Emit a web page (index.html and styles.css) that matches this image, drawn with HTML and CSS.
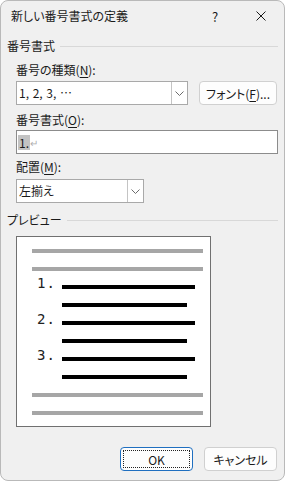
FILE: index.html
```html
<!DOCTYPE html>
<html lang="ja">
<head>
<meta charset="UTF-8" />
<title>新しい番号書式の定義</title>
<link rel="stylesheet" href="styles.css">
</head>
<body>

<div class="dialog">
  <!-- Title bar -->
  <div class="titlebar">
    <span class="title">新しい番号書式の定義</span>
    <span class="cap-btn help">?</span>
    <span class="cap-btn">
      <svg width="10" height="10" viewBox="0 0 10 10"><path d="M0.5 0.5L9.5 9.5M9.5 0.5L0.5 9.5" stroke="#1a1a1a" stroke-width="1" fill="none"/></svg>
    </span>
  </div>

  <div class="body">
    <!-- Number format group -->
    <div class="group-head">番号書式</div>

    <div class="label label-first">番号の種類(<u>N</u>):</div>
    <div class="row">
      <div class="combo combo-wide">
        <span class="combo-text plain">1, 2, 3, …</span>
        <span class="combo-btn">
          <svg width="9" height="5" viewBox="0 0 9 5"><path d="M0.5 0.5L4.5 4.5L8.5 0.5" stroke="#6b6b6b" fill="none"/></svg>
        </span>
      </div>
      <button class="btn btn-font">フォント(<u>F</u>)...</button>
    </div>

    <div class="label label-format">番号書式(<u>O</u>):</div>
    <div class="field">
      <span class="sel">1.</span><span class="mark">↵</span>
    </div>

    <div class="label label-align">配置(<u>M</u>):</div>
    <div class="combo combo-narrow">
      <span class="combo-text">左揃え</span>
      <span class="combo-btn">
        <svg width="9" height="5" viewBox="0 0 9 5"><path d="M0.5 0.5L4.5 4.5L8.5 0.5" stroke="#6b6b6b" fill="none"/></svg>
      </span>
    </div>

    <!-- Preview group -->
    <div class="group-head group-preview">プレビュー</div>

    <div class="preview">
      <div class="pv-gray"></div>
      <div class="pv-gray"></div>
      <div class="pv-item">
        <span class="pv-num">1.</span>
        <div class="pv-lines">
          <div class="pv-black"></div>
          <div class="pv-black short"></div>
        </div>
      </div>
      <div class="pv-item">
        <span class="pv-num">2.</span>
        <div class="pv-lines">
          <div class="pv-black"></div>
          <div class="pv-black short"></div>
        </div>
      </div>
      <div class="pv-item">
        <span class="pv-num">3.</span>
        <div class="pv-lines">
          <div class="pv-black"></div>
          <div class="pv-black short"></div>
        </div>
      </div>
      <div class="pv-gray"></div>
      <div class="pv-gray"></div>
    </div>

    <!-- Dialog buttons -->
    <div class="actions">
      <button class="btn btn-default"><span class="focus-ring">OK</span></button>
      <button class="btn">キャンセル</button>
    </div>
  </div>
</div>

</body>
</html>
```

FILE: styles.css
```css
/* Reset and base */
* {
  box-sizing: border-box;
}
body {
  margin: 0;
  background-color: #ffffff;
  font-family: "Noto Sans CJK JP", sans-serif;
  font-size: 12px;
  font-feature-settings: "palt";
  color: #1a1a1a;
}
u {
  text-decoration-thickness: 1px;
  text-underline-offset: 2px;
}
/* Dialog window */
.dialog {
  width: 285px;
  height: 481px;
  background-color: #f0f0f0;
  border: 1px solid #b9b9b9;
  border-radius: 8px;
  overflow: hidden;
}
/* Title bar */
.titlebar {
  display: flex;
  align-items: center;
  height: 30px;
}
.title {
  flex: 1;
  padding-left: 10px;
  line-height: 16px;
}
.cap-btn {
  width: 46px;
  height: 30px;
  display: flex;
  align-items: center;
  justify-content: center;
}
.help {
  font-size: 13px;
}
/* Body */
.body {
  padding: 0 6px;
}
.group-head {
  display: flex;
  align-items: center;
  height: 16px;
  line-height: 16px;
  margin-top: 7px;
}
.group-head::after {
  content: "";
  flex: 1;
  height: 1px;
  margin-left: 5px;
  background-color: #d8d8d8;
}
.group-preview {
  margin-top: 9px;
}
.label {
  height: 16px;
  line-height: 16px;
  margin-left: 9px;
}
.label-first {
  margin-top: 8px;
}
.label-format {
  margin-top: 7px;
}
.label-align {
  margin-top: 5px;
}
/* Combo boxes and text field */
.row {
  display: flex;
  align-items: center;
  gap: 11px;
  margin: 3px 0 0 9px;
}
.combo {
  display: flex;
  height: 24px;
  background-color: #fff;
  border: 1px solid #a9a9a9;
}
.combo-wide {
  width: 172px;
}
.combo-narrow {
  width: 128px;
  margin: 4px 0 0 9px;
}
.combo-text {
  flex: 1;
  padding-left: 2px;
  line-height: 22px;
}
.combo-text.plain {
  font-feature-settings: normal;
  word-spacing: 1px;
}
.combo-btn {
  width: 16px;
  border-left: 1px solid #c4c4c4;
  display: flex;
  align-items: center;
  justify-content: center;
}
.field {
  display: flex;
  align-items: center;
  width: 262px;
  height: 24px;
  margin: 2px 0 0 9px;
  padding-left: 1px;
  background-color: #fff;
  border: 1px solid #8c8c8c;
}
.sel {
  background-color: #c3c3c3;
  line-height: 15px;
  padding: 0 1px;
}
.mark {
  color: #b0b0b0;
  font-size: 10px;
  line-height: 15px;
}
/* Buttons */
.btn {
  height: 24px;
  padding: 0;
  font-family: inherit;
  font-size: 12px;
  font-feature-settings: "palt";
  color: #1a1a1a;
  background-color: #fdfdfd;
  border: 1px solid #d0d0d0;
  border-radius: 4px;
  width: 73px;
}
.btn-font {
  width: 78px;
}
.btn-default {
  border-color: #1f6fc0;
  padding: 2px;
}
.focus-ring {
  display: flex;
  align-items: center;
  justify-content: center;
  height: 100%;
  border: 1px dotted #222;
}
/* Preview box */
.preview {
  display: flex;
  flex-direction: column;
  gap: 14px;
  width: 195px;
  height: 191px;
  margin: 8px 0 0 9px;
  padding: 12px 0 0 15px;
  background-color: #fff;
  border: 1px solid #707070;
}
.pv-gray {
  width: 171px;
  height: 4px;
  background-color: #a6a6a6;
}
.pv-item {
  display: flex;
}
.pv-num {
  width: 30px;
  height: 15px;
  margin-top: -9px;
  padding-left: 5px;
  font-family: "DejaVu Sans Mono", monospace;
  font-size: 14px;
  line-height: 15px;
  letter-spacing: 1px;
  color: #222;
}
.pv-lines {
  display: flex;
  flex-direction: column;
  gap: 14px;
}
.pv-black {
  width: 133px;
  height: 4px;
  background-color: #000;
}
.pv-black.short {
  width: 125px;
}
/* Dialog buttons */
.actions {
  display: flex;
  justify-content: flex-end;
  gap: 11px;
  margin-top: 20px;
  padding-right: 1px;
}
```
